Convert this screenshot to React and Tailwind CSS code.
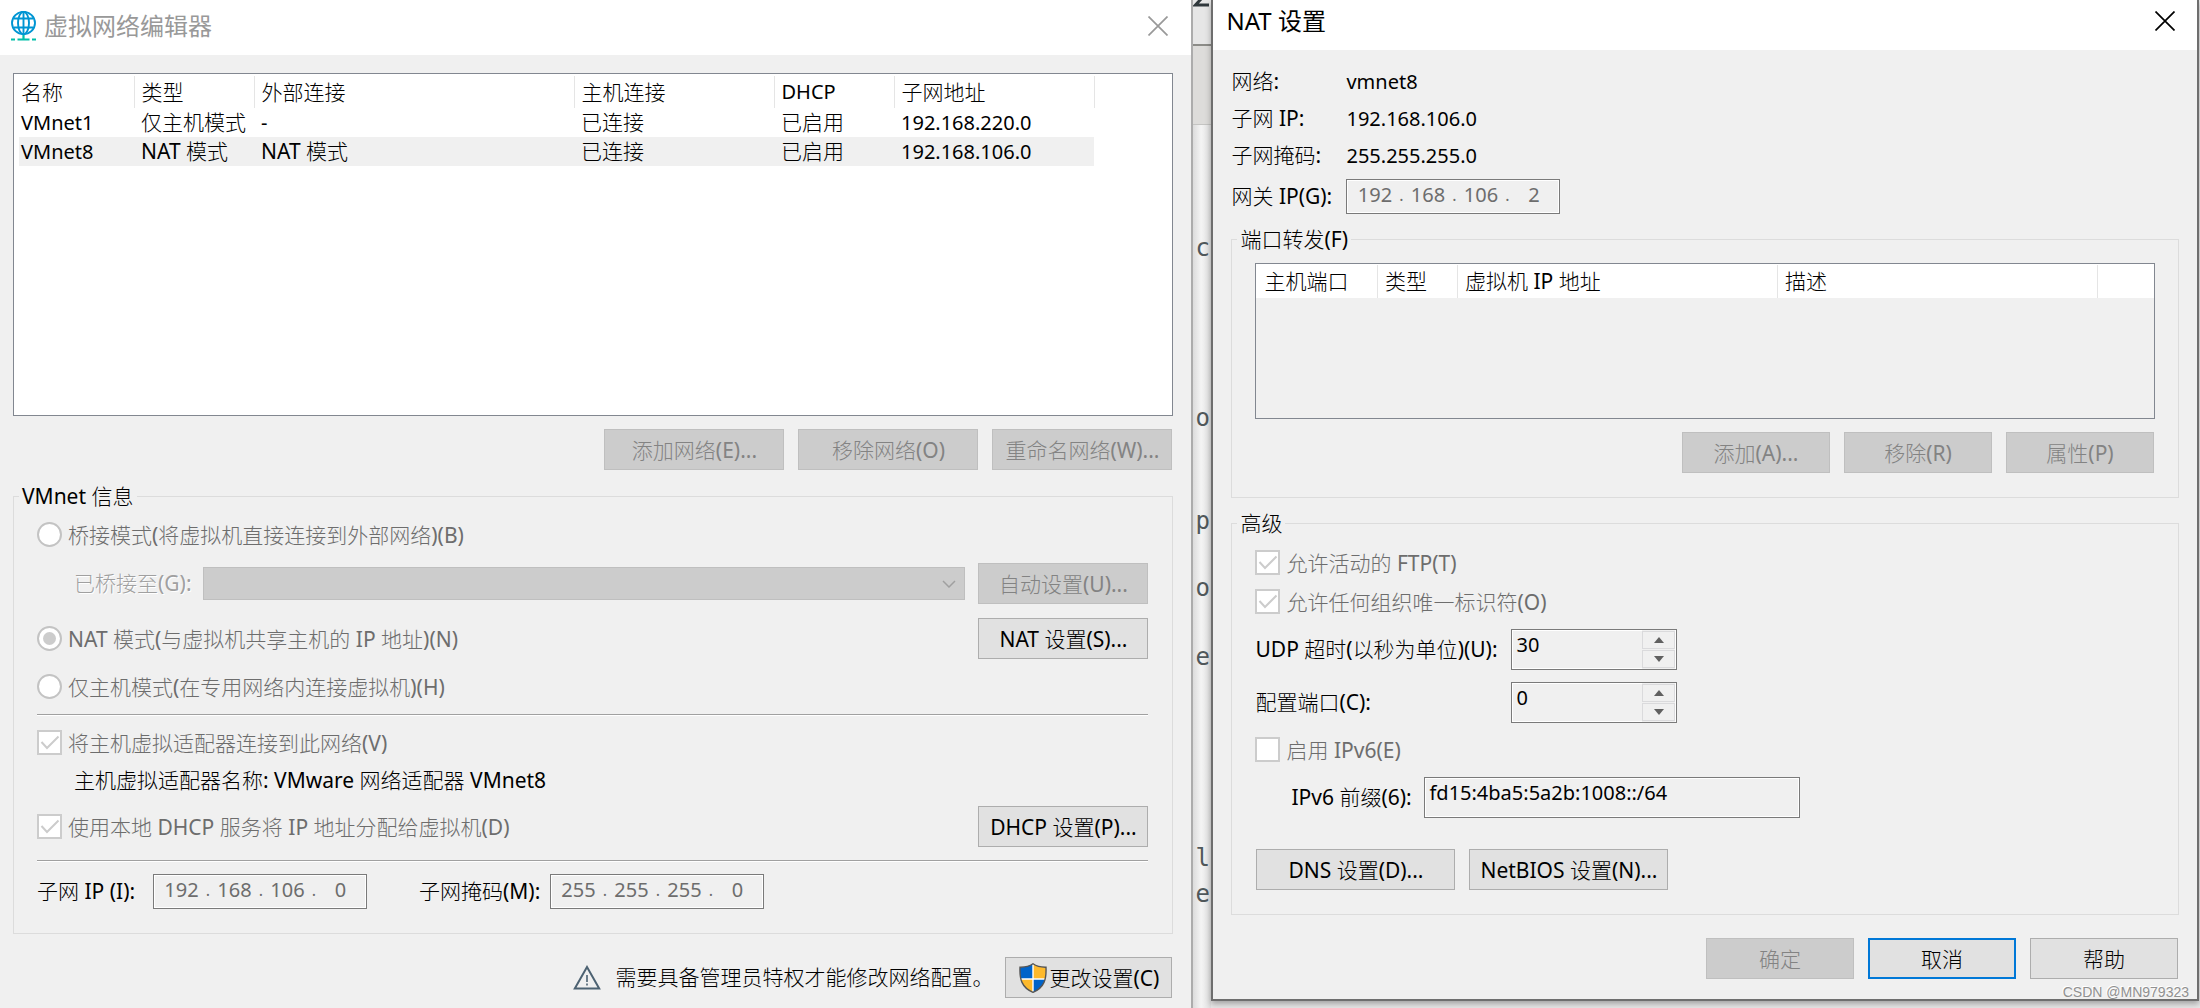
import { Fragment } from 'react';
import { clsx } from 'clsx';

const NETWORKS = [
  { name: 'VMnet1', type: '仅主机模式', external: '-', host: '已连接', dhcp: '已启用', subnet: '192.168.220.0' },
  { name: 'VMnet8', type: 'NAT 模式', external: 'NAT 模式', host: '已连接', dhcp: '已启用', subnet: '192.168.106.0', selected: true },
];

const NETWORK_COLUMNS = [
  { label: '名称', width: 'w-[120px]' },
  { label: '类型', width: 'w-[120px]' },
  { label: '外部连接', width: 'w-[320px]' },
  { label: '主机连接', width: 'w-[200px]' },
  { label: 'DHCP', width: 'w-[120px]' },
  { label: '子网地址', width: 'w-[200px]' },
];

const PORT_COLUMNS = [
  { label: '主机端口', width: 'w-[120px]' },
  { label: '类型', width: 'w-[80px]' },
  { label: '虚拟机 IP 地址', width: 'w-[320px]' },
  { label: '描述', width: 'w-[320px]' },
];

const NAT_INFO = [
  { label: '网络:', value: 'vmnet8' },
  { label: '子网 IP:', value: '192.168.106.0' },
  { label: '子网掩码:', value: '255.255.255.0' },
];

// Labels with Chinese in them are one pixel larger, and the Chinese runs are lighter
function Txt({ children }) {
  const parts = children.split(/([\u3002\u4e00-\u9fff]+)/).filter(Boolean);
  const isChinese = part => /[\u3002\u4e00-\u9fff]/.test(part);
  return (
    <span className={clsx('whitespace-pre', isChinese(children) && 'text-[21px]')}>
      {parts.map((part, i) =>
        isChinese(part)
          ? <span key={i} className="font-light">{part}</span>
          : <Fragment key={i}>{part}</Fragment>
      )}
    </span>
  );
}

function Button({ children, className, disabled, primary }) {
  return (
    <button
      type="button"
      disabled={disabled}
      className={clsx(
        'flex h-[41px] shrink-0 items-center justify-center',
        disabled && 'border border-[#bfbfbf] bg-[#cccccc] text-[#838383]',
        !disabled && !primary && 'border border-[#adadad] bg-[#e1e1e1]',
        primary && 'border-2 border-[#0078d7] bg-[#e1e1e1]',
        className
      )}
    >
      {typeof children === 'string' ? <Txt>{children}</Txt> : children}
    </button>
  );
}

function Radio({ label, checked }) {
  return (
    <label className="flex h-[25px] items-center gap-[6px] text-[#6d6d6d]">
      <input
        type="radio"
        name="mode"
        disabled
        defaultChecked={checked}
        className="grid size-[25px] shrink-0 appearance-none place-content-center rounded-full border-2 border-[#c3c3c3] bg-white checked:before:size-[13px] checked:before:rounded-full checked:before:bg-[#cccccc] checked:before:content-['']"
      />
      <Txt>{label}</Txt>
    </label>
  );
}

function Check({ label, checked }) {
  return (
    <label className="flex h-[25px] items-center gap-[6px] text-[#6d6d6d]">
      <span className="relative size-[25px] shrink-0">
        <input
          type="checkbox"
          disabled
          defaultChecked={checked}
          className="block size-[25px] appearance-none border-2 border-[#cccccc] bg-white"
        />
        {checked && (
          <svg viewBox="0 0 25 25" className="absolute inset-0 size-[25px]" fill="none" stroke="#cccccc" strokeWidth="2">
            <path d="M4.500 12l5.500 6L21.500 6.500" />
          </svg>
        )}
      </span>
      <Txt>{label}</Txt>
    </label>
  );
}

function IpField({ id, label, parts }) {
  return (
    <div role="group" aria-label={label} className="flex h-[35px] w-[214px] items-center border border-[#7a7a7a] pb-1 pl-1 text-[#6d6d6d] shadow-[inset_0_0_0_1px_#fff]">
      {parts.map((part, i) => (
        <Fragment key={i}>
          {i > 0 && <span className="w-[6px] text-center text-base">.</span>}
          <input
            id={i === 0 ? id : undefined}
            aria-label={`${label} ${i + 1}`}
            disabled
            defaultValue={part}
            className="w-[47px] text-center"
          />
        </Fragment>
      ))}
    </div>
  );
}

function Spinner({ id, value }) {
  return (
    <div className="flex h-[41px] w-[166px] border border-[#7a7a7a] shadow-[inset_0_0_0_1px_#fff]">
      <input id={id} defaultValue={value} className="h-7 min-w-0 flex-1 pl-1" />
      <div className="flex w-[34px] flex-col gap-px border-r border-white bg-[#f0f0f0] py-px">
        <button type="button" aria-label="增加" className="flex flex-1 items-center justify-center border border-[#dadadc]">
          <svg viewBox="0 0 10 6" className="h-[6px] w-[10px]" fill="#606060"><path d="M5 0l5 6H0z" /></svg>
        </button>
        <button type="button" aria-label="减少" className="flex flex-1 items-center justify-center border border-[#dadadc]">
          <svg viewBox="0 0 10 6" className="h-[6px] w-[10px]" fill="#606060"><path d="M0 0h10L5 6z" /></svg>
        </button>
      </div>
    </div>
  );
}

function Group({ title, className, children }) {
  return (
    <fieldset className={clsx('border border-[#dcdcdc]', className)}>
      <legend className="-ml-[18px] h-6 px-[3px] leading-6"><Txt>{title}</Txt></legend>
      {children}
    </fieldset>
  );
}

function HeaderCells({ columns }) {
  return columns.map(col => (
    <th key={col.label} className={clsx('border-r border-[#e5e5e5] pl-[7px] text-left font-normal', col.width)}>
      <Txt>{col.label}</Txt>
    </th>
  ));
}

function Divider() {
  return <hr className="h-[2px] border-t border-b border-t-[#a0a0a0] border-b-white" />;
}

function CloseIcon() {
  return (
    <svg viewBox="0 0 20 20" className="size-5" fill="none" stroke="currentColor" strokeWidth="1.700">
      <path d="M0.500 0.500l19 19M19.500 0.500l-19 19" />
    </svg>
  );
}

function GlobeIcon() {
  return (
    <svg viewBox="0 0 25 30" className="h-[30px] w-[25px]" fill="none" stroke="#0095d3" strokeWidth="1.900">
      <ellipse cx="12.500" cy="12" rx="11.500" ry="11.200" />
      <ellipse cx="12.500" cy="12" rx="5.500" ry="11.200" />
      <path d="M2.500 7.500h20M2.500 16.500h20M12.500 1v22" />
      <path d="M0 28.500h4M6.500 28.500h12M21 28.500h4M12.500 24v4" stroke="#00bfa9" strokeWidth="2.200" />
    </svg>
  );
}

function WarningIcon() {
  return (
    <svg viewBox="0 0 28 25" className="h-[25px] w-7" fill="none" stroke="#4d6272" strokeWidth="2">
      <path d="M14 2L1.800 23.500h24.400z" />
      <path d="M14 10v7M14 18.500v2" strokeWidth="1.600" />
    </svg>
  );
}

function ShieldIcon() {
  return (
    <svg viewBox="0 0 28 30" className="h-[30px] w-7">
      <clipPath id="shield">
        <path d="M14 0.800C10.500 3.300 6 4.300 1 4.200C0.500 16 2.500 24.500 14 29.300C25.500 24.500 27.500 16 27 4.200C22 4.300 17.500 3.300 14 0.800z" />
      </clipPath>
      <g clipPath="url(#shield)">
        <path fill="#fff" d="M0 0h28v30H0z" />
        <path fill="#0063c9" d="M0 0h13.300v15.300H0zM14.700 16.700H28V30H14.700z" />
        <path fill="#fdb92c" d="M14.700 0H28v15.300H14.700zM0 16.700h13.300V30H0z" />
      </g>
      <path
        d="M14 0.800C10.500 3.300 6 4.300 1 4.200C0.500 16 2.500 24.500 14 29.300C25.500 24.500 27.500 16 27 4.200C22 4.300 17.500 3.300 14 0.800z"
        fill="none"
        stroke="#555"
        strokeWidth="1.400"
      />
    </svg>
  );
}

function NetworkEditor() {
  return (
    <section className="min-w-0 flex-[1192]">
      <header className="flex h-[55px] items-center bg-white pr-[23px] pb-[3px] pl-[11px]">
        <GlobeIcon />
        <h1 className="ml-2 text-2xl text-[#999999]">虚拟网络编辑器</h1>
        <button type="button" aria-label="关闭" className="ml-auto text-[#999999]"><CloseIcon /></button>
      </header>

      <div className="pt-[18px] pr-[18px] pl-[13px]">
        <div className="h-[343px] border border-[#828790] bg-white pt-[2px]">
          <table className="table-fixed border-collapse">
            <thead>
              <tr className="h-[32px]"><HeaderCells columns={NETWORK_COLUMNS} /></tr>
            </thead>
            <tbody>
              {NETWORKS.map(net => (
                <tr
                  key={net.name}
                  className={clsx('h-[29px]', net.selected && 'bg-[linear-gradient(to_right,white_5px,#f0f0f0_5px)]')}
                >
                  {[net.name, net.type, net.external, net.host, net.dhcp, net.subnet].map((cell, i) => (
                    <td key={i} className="pl-[7px] leading-[29px]"><Txt>{cell}</Txt></td>
                  ))}
                </tr>
              ))}
            </tbody>
          </table>
        </div>

        <div className="mt-[13px] flex justify-end gap-[14px] pr-px">
          <Button disabled className="w-[180px]">添加网络(E)...</Button>
          <Button disabled className="w-[180px]">移除网络(O)</Button>
          <Button disabled className="w-[180px]">重命名网络(W)...</Button>
        </div>

        <Group title="VMnet 信息" className="mt-[14px] pr-6 pb-6 pl-[23px]">
          <div className="pt-[14px]">
            <Radio label="桥接模式(将虚拟机直接连接到外部网络)(B)" />
          </div>
          <div className="mt-4 flex items-center">
            <label htmlFor="bridge" className="w-[166px] pl-[37px] text-[#a0a0a0] [text-shadow:1px_1px_0_#fff]">
              <Txt>已桥接至(G):</Txt>
            </label>
            <div className="relative flex-1">
              <select id="bridge" disabled className="block h-[33px] w-full appearance-none border border-[#bfbfbf] bg-[#cccccc]" />
              <svg viewBox="0 0 14 8" className="absolute top-[13px] right-[9px] h-2 w-[14px]" fill="none" stroke="#a0a0a0" strokeWidth="1.500">
                <path d="M1 1l6 6 6-6" />
              </svg>
            </div>
            <Button disabled className="ml-[13px] w-[170px]">自动设置(U)...</Button>
          </div>
          <div className="mt-[14px] flex items-center justify-between">
            <Radio label="NAT 模式(与虚拟机共享主机的 IP 地址)(N)" checked />
            <Button className="w-[170px]">NAT 设置(S)...</Button>
          </div>
          <div className="my-[15px]">
            <Radio label="仅主机模式(在专用网络内连接虚拟机)(H)" />
          </div>
          <Divider />
          <div className="mt-[14px]">
            <Check label="将主机虚拟适配器连接到此网络(V)" checked />
          </div>
          <p className="my-[13px] pl-[37px] leading-6">
            <Txt>主机虚拟适配器名称: VMware 网络适配器 VMnet8</Txt>
          </p>
          <div className="mb-[13px] flex items-center justify-between">
            <Check label="使用本地 DHCP 服务将 IP 地址分配给虚拟机(D)" checked />
            <Button className="w-[170px]">DHCP 设置(P)...</Button>
          </div>
          <Divider />
          <div className="mt-3 flex items-center">
            <label htmlFor="subnet-ip" className="w-[116px]"><Txt>子网 IP (I):</Txt></label>
            <IpField id="subnet-ip" label="子网 IP" parts={['192', '168', '106', '0']} />
            <label htmlFor="subnet-mask" className="ml-[52px] w-[131px]"><Txt>子网掩码(M):</Txt></label>
            <IpField id="subnet-mask" label="子网掩码" parts={['255', '255', '255', '0']} />
          </div>
        </Group>

        <footer className="mt-[23px] flex items-center justify-end pr-px">
          <WarningIcon />
          <p className="mr-3 ml-[14px]"><Txt>需要具备管理员特权才能修改网络配置。</Txt></p>
          <Button className="w-[167px] gap-[3px]">
            <ShieldIcon />
            <Txt>更改设置(C)</Txt>
          </Button>
        </footer>
      </div>
    </section>
  );
}

// Sliver of the editor window that stays visible between the two dialogs
function BackgroundStrip() {
  return (
    <div aria-hidden="true" className="flex w-5 shrink-0 flex-col overflow-hidden border-l-2 border-[#acacac] bg-linear-to-r from-[#dcdcdc] via-[#f4f4f4] via-45% to-[#dedede] pl-[2px] font-['DejaVu_Sans_Mono',monospace] text-2xl leading-8 font-medium text-[#50585b]">
      <div className="-ml-[2px] h-[46px] border-b-2 border-[#8c8c88] bg-[#e6e6e6]">
        <svg viewBox="0 0 18 8" className="h-2 w-[18px]" fill="none" stroke="#30383c" strokeWidth="3">
          <path d="M8 -1L2.500 5H16" />
        </svg>
      </div>
      <div className="-ml-[2px] h-[79px] border-b border-[#c4c4c2] bg-[#dddcda]" />
      <span className="mt-[107px]">c</span>
      <span className="mt-[138px]">o</span>
      <span className="mt-[71px]">p</span>
      <span className="mt-[35px]">o</span>
      <span className="mt-[37px]">e</span>
      <span className="mt-[169px]">l</span>
      <span className="mt-[4px]">e</span>
    </div>
  );
}

function NatSettings() {
  return (
    <section className="relative border-x-2 border-b-2 border-[#6e6e6e] bg-[#f0f0f0] shadow-[0_3px_6px_rgba(0,0,0,0.300)]">
      <header className="flex h-[50px] items-center bg-white pr-[22px] pb-2 pl-[13px]">
        <h2 className="text-2xl">NAT 设置</h2>
        <button type="button" aria-label="关闭" className="ml-auto"><CloseIcon /></button>
      </header>

      <div className="pt-[13px] pr-[18px] pl-[18px]">
        <dl>
          {NAT_INFO.map(row => (
            <div key={row.label} className="flex h-[37px] items-center">
              <dt className="w-[115px]"><Txt>{row.label}</Txt></dt>
              <dd><Txt>{row.value}</Txt></dd>
            </div>
          ))}
        </dl>
        <div className="mt-[5px] flex items-center">
          <label htmlFor="gateway" className="w-[115px]"><Txt>网关 IP(G):</Txt></label>
          <IpField id="gateway" label="网关 IP" parts={['192', '168', '106', '2']} />
        </div>

        <Group title="端口转发(F)" className="mt-[13px] px-[23px] pb-6">
          <div className="mt-3 h-[156px] border border-[#828790]">
            <div className="border border-b-0 border-white bg-white">
              <table className="table-fixed border-collapse">
                <thead>
                  <tr className="h-[33px]"><HeaderCells columns={PORT_COLUMNS} /></tr>
                </thead>
              </table>
            </div>
          </div>
          <div className="mt-[13px] flex justify-end gap-[14px] pr-px">
            <Button disabled className="w-[148px]">添加(A)...</Button>
            <Button disabled className="w-[148px]">移除(R)</Button>
            <Button disabled className="w-[148px]">属性(P)</Button>
          </div>
        </Group>

        <Group title="高级" className="mt-[13px] px-[23px] pb-6">
          <div className="space-y-[14px] pt-[15px]">
            <Check label="允许活动的 FTP(T)" checked />
            <Check label="允许任何组织唯一标识符(O)" checked />
          </div>
          <div className="mt-[15px] flex items-center">
            <label htmlFor="udp" className="w-[256px]"><Txt>UDP 超时(以秒为单位)(U):</Txt></label>
            <Spinner id="udp" value="30" />
          </div>
          <div className="mt-3 mb-[14px] flex items-center">
            <label htmlFor="port" className="w-[256px]"><Txt>配置端口(C):</Txt></label>
            <Spinner id="port" value="0" />
          </div>
          <Check label="启用 IPv6(E)" />
          <div className="mt-[15px] flex items-center">
            <label htmlFor="prefix" className="w-[169px] pl-[36px]"><Txt>IPv6 前缀(6):</Txt></label>
            <input
              id="prefix"
              defaultValue="fd15:4ba5:5a2b:1008::/64"
              className="h-[41px] w-[376px] border border-[#7a7a7a] pb-[10px] pl-1 shadow-[inset_0_0_0_1px_#fff]"
            />
          </div>
          <div className="mt-[31px] flex gap-[14px] pl-px">
            <Button className="w-[199px]">DNS 设置(D)...</Button>
            <Button className="w-[199px]">NetBIOS 设置(N)...</Button>
          </div>
        </Group>

        <footer className="mt-[23px] mb-5 flex justify-end gap-[14px] pr-px">
          <Button disabled className="w-[148px]">确定</Button>
          <Button primary className="w-[148px]">取消</Button>
          <Button className="w-[148px]">帮助</Button>
        </footer>
      </div>
      <span className="absolute right-[8px] bottom-0 font-['Liberation_Sans',sans-serif] text-sm leading-none text-[#909090] [text-shadow:-1px_-1px_0_#fff]">
        CSDN @MN979323
      </span>
    </section>
  );
}

export default function App() {
  return (
    <main className="flex min-h-screen w-full overflow-hidden bg-[#f0f0f0] font-['Noto_Sans','Noto_Sans_CJK_SC',sans-serif] text-xl leading-6 text-black">
      <NetworkEditor />
      <BackgroundStrip />
      <div className="min-w-0 flex-[988] bg-[#e8e8e8] pr-px">
        <NatSettings />
      </div>
    </main>
  );
}
